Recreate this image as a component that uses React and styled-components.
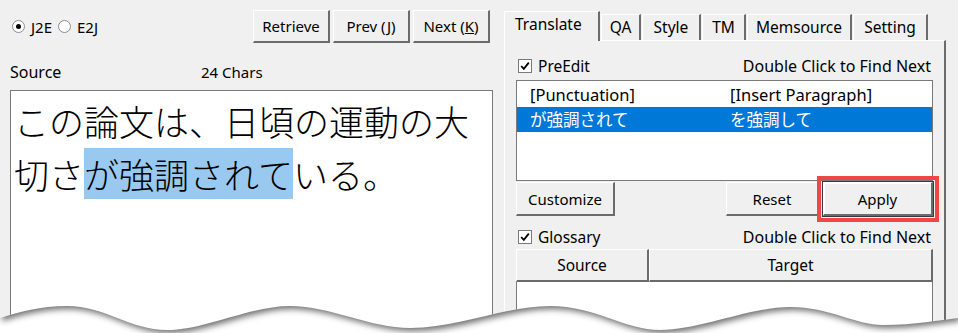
import React from "react";
import styled, { createGlobalStyle } from "styled-components";

const GlobalStyle = createGlobalStyle`
  html, body {
    margin: 0;
    padding: 0;
    background: #f0f0f0;
  }
  body {
    font-family: "Noto Sans", "Noto Sans CJK JP", sans-serif;
    font-size: 16px;
    color: #000;
  }
`;

const Screen = styled.div`
  position: relative;
  width: 958px;
  height: 333px;
  overflow: hidden;
  display: flex;
  background: #f0f0f0;
`;

const LeftPane = styled.div`
  width: 500px;
  display: flex;
  flex-direction: column;
`;

const TopRow = styled.div`
  display: flex;
  align-items: center;
  height: 33px;
  padding: 10px 10px 0 12px;
`;

const RadioLabel = styled.label`
  display: flex;
  align-items: center;
  gap: 6px;
  font-size: 15px;
  margin-right: 6px;
`;

const RadioDot = styled.span`
  box-sizing: border-box;
  width: 13px;
  height: 13px;
  border-radius: 50%;
  border: 1px solid #8c8c8c;
  background: #fff;
  display: flex;
  align-items: center;
  justify-content: center;
  &::after {
    content: "";
    width: 5px;
    height: 5px;
    border-radius: 50%;
    background: ${(p) => (p.$on ? "#000" : "transparent")};
  }
`;

const ButtonGroup = styled.div`
  display: flex;
  gap: 3px;
  margin-left: auto;
`;

const Button = styled.button`
  box-sizing: border-box;
  width: ${(p) => p.$w}px;
  height: ${(p) => p.$h || 33}px;
  padding: 0;
  font-family: inherit;
  font-size: 15px;
  color: #000;
  background: #f0f0f0;
  border-style: solid;
  border-width: 1px 2px 2px 1px;
  border-color: #fff #6b6b6b #6b6b6b #fff;
  outline: ${(p) => (p.$marked ? "4px solid #f04646" : "none")};
  outline-offset: 2px;
  box-shadow: ${(p) =>
    p.$marked ? "0 0 0 1px #3a3a3a, inset 1px 1px 0 #fff" : "none"};
`;

const LabelRow = styled.div`
  display: flex;
  align-items: center;
  height: 20px;
  margin-top: 19px;
  padding-left: 10px;
  font-size: 16px;
`;

const SourceLabel = styled.span`
  width: 191px;
`;

const Count = styled.span`
  font-size: 15px;
`;

const SourceBox = styled.div`
  flex: 1;
  margin: 8px 0 0 10px;
  width: 483px;
  box-sizing: border-box;
  border: 1px solid #7a7a7a;
  background: #fff;
  padding: 3px 6px 0 3px;
  font-family: "Noto Sans CJK JP", sans-serif;
  font-weight: 300;
  font-size: 35px;
  line-height: 53px;
`;

const Mark = styled.span`
  background: #99c9ef;
`;

const RightPane = styled.div`
  width: 442px;
  margin-left: 4px;
  padding-top: 11px;
  display: flex;
  flex-direction: column;
`;

const TabBar = styled.div`
  display: flex;
  align-items: flex-end;
  gap: 1px;
  height: 29px;
  position: relative;
  z-index: 1;
`;

const Tab = styled.div`
  box-sizing: border-box;
  width: ${(p) => p.$w}px;
  height: ${(p) => (p.$active ? 30 : 26)}px;
  margin-bottom: ${(p) => (p.$active ? -1 : 0)}px;
  padding-left: ${(p) => (p.$active ? 10 : 0)}px;
  text-align: ${(p) => (p.$active ? "left" : "center")};
  line-height: 24px;
  font-size: 15.5px;
  background: #f0f0f0;
  border-style: solid;
  border-width: 1px 2px 0 1px;
  border-color: #fff #6b6b6b #fff #fff;
`;

const Panel = styled.div`
  flex: 1;
  display: flex;
  flex-direction: column;
  border-style: solid;
  border-width: 1px 2px 0 1px;
  border-color: #fff #6b6b6b #fff #fff;
  padding: 16px 11px 0 11px;
`;

const CheckRow = styled.div`
  display: flex;
  align-items: center;
  height: 18px;
  margin-top: ${(p) => p.$top || 0}px;
  font-size: 15.5px;
`;

const CheckLabel = styled.span`
  display: flex;
  align-items: center;
  gap: 6px;
  padding-left: 2px;
`;

const CheckBox = styled.span`
  box-sizing: border-box;
  width: 14px;
  height: 14px;
  border: 1px solid #7a7a7a;
  background: #fff;
  display: flex;
  align-items: center;
  justify-content: center;
`;

const Hint = styled.span`
  margin-left: auto;
  padding-right: 2px;
  font-size: 16px;
`;

const ListBox = styled.div`
  margin-top: 5px;
  height: 101px;
  box-sizing: border-box;
  border: 1px solid #7a7a7a;
  background: #fff;
  padding-top: 1px;
`;

const ListRow = styled.div`
  display: grid;
  grid-template-columns: 200px 1fr;
  height: 25px;
  line-height: 25px;
  padding-left: 13px;
  font-size: 16.5px;
  background: ${(p) => (p.$selected ? "#0078d7" : "transparent")};
  color: ${(p) => (p.$selected ? "#fff" : "#000")};
`;

const ActionRow = styled.div`
  display: flex;
  gap: 4px;
  margin-top: 1px;
  & > :first-child {
    margin-right: auto;
  }
`;

const Header = styled.div`
  display: flex;
  margin-top: 3px;
`;

const HeaderCell = styled.div`
  box-sizing: border-box;
  width: ${(p) => p.$w}px;
  flex: ${(p) => (p.$w ? "none" : 1)};
  height: 33px;
  line-height: 30px;
  text-align: center;
  font-size: 15.5px;
  background: #f0f0f0;
  border-style: solid;
  border-width: 1px 2px 2px 1px;
  border-color: #fff #6b6b6b #6b6b6b #fff;
`;

const GlossaryBody = styled.div`
  flex: 1;
  background: #fff;
  border-left: 1px solid #7a7a7a;
  border-right: 1px solid #7a7a7a;
`;

const TornEdge = styled.svg`
  position: absolute;
  left: 0;
  bottom: 0;
  z-index: 5;
`;

const wave =
  "M0 25 C20 19 40 13 67 13 C105 13 130 37 167 37 C205 37 250 13 290 13 C330 13 370 35 410 35 C460 35 505 13 550 13 C595 13 625 37 660 37 C700 37 750 14 790 14 C830 14 855 32 883 32 C915 32 940 27 958 25";

const Check = () => (
  <svg width="10" height="10" viewBox="0 0 10 10">
    <path d="M1.2 5 L3.8 7.8 L8.8 1.6" fill="none" stroke="#000" strokeWidth="1.8" />
  </svg>
);

const Torn = () => (
  <TornEdge width="958" height="40" viewBox="0 0 958 40">
    <defs>
      <clipPath id="below">
        <path d={`${wave} L958 40 L0 40 Z`} />
      </clipPath>
      <filter id="soft" x="-5%" y="-50%" width="110%" height="200%">
        <feGaussianBlur stdDeviation="3" />
      </filter>
    </defs>
    <path d={`${wave} L958 40 L0 40 Z`} fill="#fff" />
    <g clipPath="url(#below)">
      <path
        d={`${wave} L958 -10 L0 -10 Z`}
        fill="#4a4a4a"
        transform="translate(2 3)"
        filter="url(#soft)"
        opacity="0.8"
      />
    </g>
  </TornEdge>
);

const tabs = [
  { label: "Translate", w: 96, active: true },
  { label: "QA", w: 40 },
  { label: "Style", w: 59 },
  { label: "TM", w: 44 },
  { label: "Memsource", w: 105 },
  { label: "Setting", w: 75 },
];

const App = () => {
  return (
    <>
      <GlobalStyle />
      <Screen>
        <LeftPane>
          <TopRow>
            <RadioLabel>
              <RadioDot $on />
              J2E
            </RadioLabel>
            <RadioLabel>
              <RadioDot />
              E2J
            </RadioLabel>
            <ButtonGroup>
              <Button $w={77}>Retrieve</Button>
              <Button $w={77}>
                Prev (<u>J</u>)
              </Button>
              <Button $w={77}>
                Next (<u>K</u>)
              </Button>
            </ButtonGroup>
          </TopRow>
          <LabelRow>
            <SourceLabel>Source</SourceLabel>
            <Count>24 Chars</Count>
          </LabelRow>
          <SourceBox>
            この論文は、日頃の運動の大切さ<Mark>が強調されて</Mark>いる。
          </SourceBox>
        </LeftPane>

        <RightPane>
          <TabBar>
            {tabs.map((t) => (
              <Tab key={t.label} $w={t.w} $active={t.active}>
                {t.label}
              </Tab>
            ))}
          </TabBar>
          <Panel>
            <CheckRow>
              <CheckLabel>
                <CheckBox>
                  <Check />
                </CheckBox>
                PreEdit
              </CheckLabel>
              <Hint>Double Click to Find Next</Hint>
            </CheckRow>
            <ListBox>
              <ListRow>
                <span>[Punctuation]</span>
                <span>[Insert Paragraph]</span>
              </ListRow>
              <ListRow $selected>
                <span>が強調されて</span>
                <span>を強調して</span>
              </ListRow>
            </ListBox>
            <ActionRow>
              <Button $w={99} $h={34}>
                Customize
              </Button>
              <Button $w={93} $h={34}>
                Reset
              </Button>
              <Button $w={110} $h={34} $marked>
                Apply
              </Button>
            </ActionRow>
            <CheckRow $top={12}>
              <CheckLabel>
                <CheckBox>
                  <Check />
                </CheckBox>
                Glossary
              </CheckLabel>
              <Hint>Double Click to Find Next</Hint>
            </CheckRow>
            <Header>
              <HeaderCell $w={133}>Source</HeaderCell>
              <HeaderCell>Target</HeaderCell>
            </Header>
            <GlossaryBody />
          </Panel>
        </RightPane>
        <Torn />
      </Screen>
    </>
  );
};

export default App;
